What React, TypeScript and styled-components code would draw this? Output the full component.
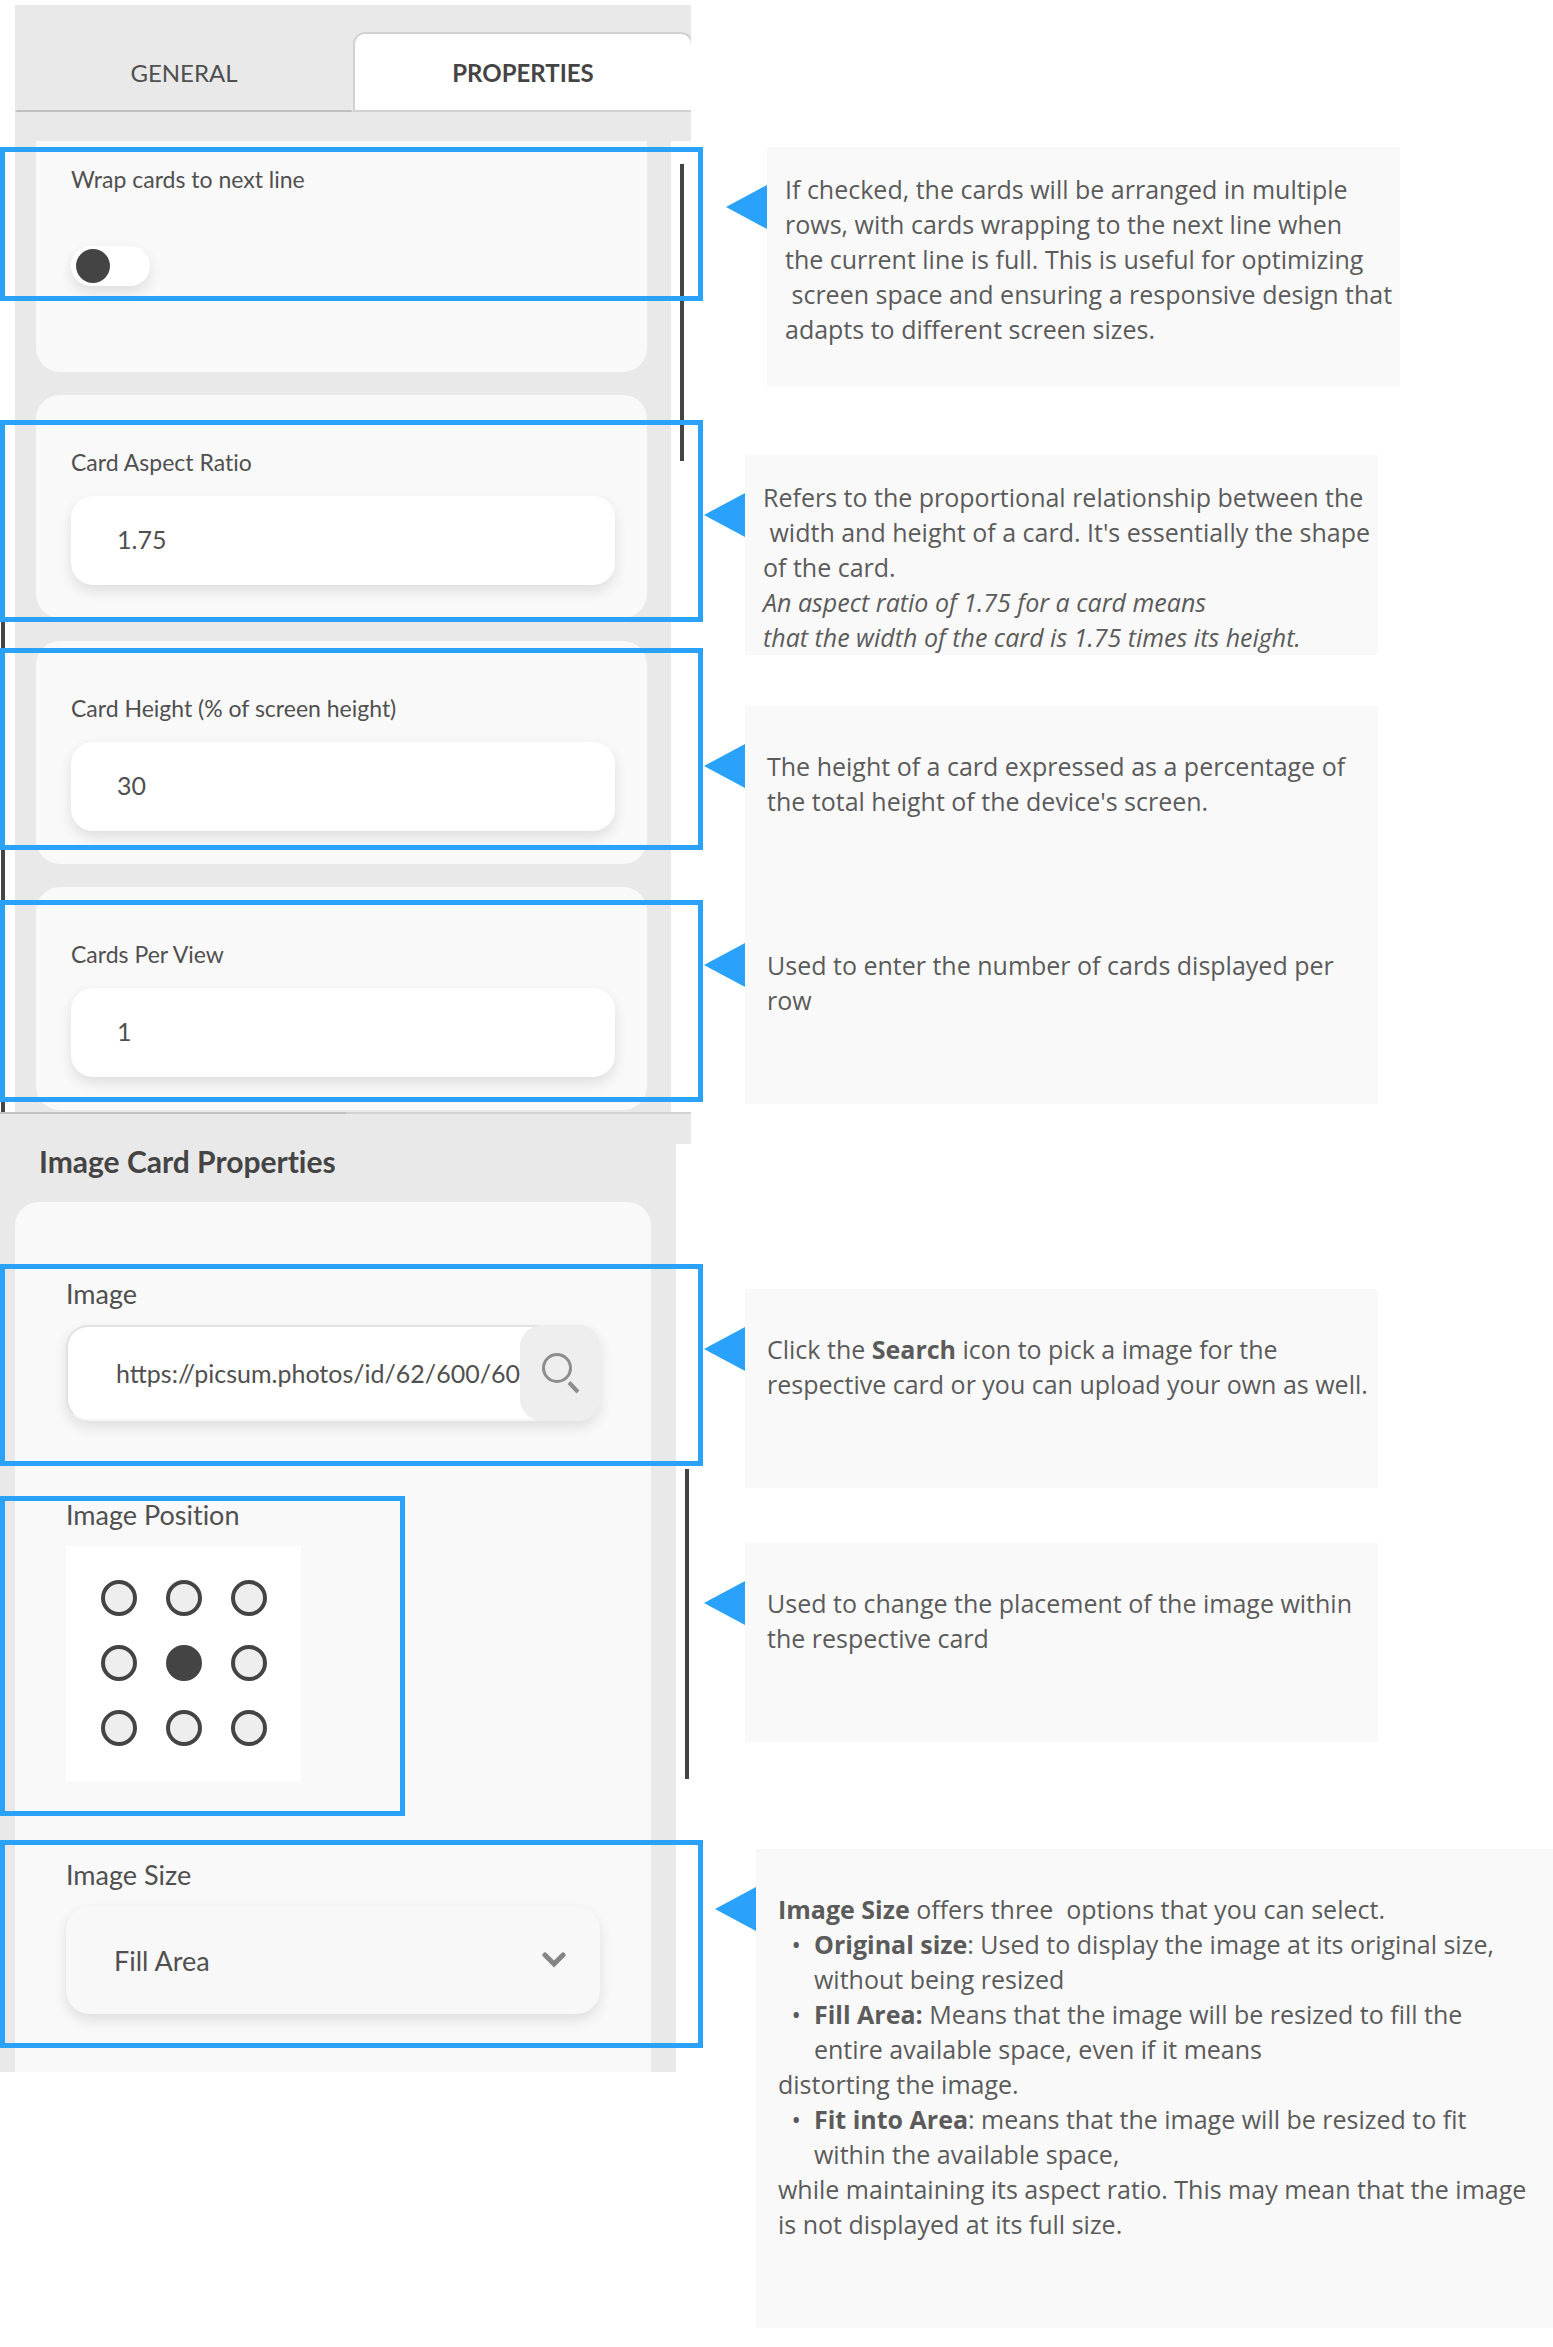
import React, { useState } from "react";
import styled, { createGlobalStyle } from "styled-components";

const ACCENT = "#2aa2fb";
const INK = "#444444";
const TEXT = "#505050";
const PANEL = "#e9e9e9";
const SURFACE = "#f9f9f9";
const SHADOW = "0 6px 14px rgba(0, 0, 0, 0.11)";

const GlobalStyle = createGlobalStyle`
  *, *::before, *::after { box-sizing: border-box; }
  body { margin: 0; background: #ffffff; }
  button, input, select { font-family: inherit; color: inherit; margin: 0; }
`;

const Page = styled.main`
  display: grid;
  grid-template-columns: minmax(0, 703fr) minmax(0, 850fr);
  align-items: start;
`;

/* Left side: the two property panels */

const Panels = styled.div`
  padding-top: 5px;
  font-family: Lato, "Open Sans", sans-serif;
  font-variant-ligatures: none;
  color: ${TEXT};
`;

const ListPanel = styled.section`
  position: relative;
  padding-left: 15px;
`;

const TabStrip = styled.header`
  margin-right: 12px;
  padding: 27px 0 29px;
  background: ${PANEL};
  overflow: hidden;
`;

const Tabs = styled.div`
  display: grid;
  grid-template-columns: 169fr 170fr;
  margin-right: -2px;
`;

const Tab = styled.button<{ $active?: boolean }>`
  height: 80px;
  padding: 2px 0 0;
  font-size: 24px;
  line-height: 30px;
  font-weight: ${(p) => (p.$active ? 700 : 400)};
  color: ${(p) => (p.$active ? INK : TEXT)};
  background: ${(p) => (p.$active ? "#ffffff" : "transparent")};
  border: 2px solid ${(p) => (p.$active ? "#d2d2d2" : "transparent")};
  border-bottom-color: ${(p) => (p.$active ? "#d2d2d2" : "#bfbfbf")};
  border-radius: ${(p) => (p.$active ? "12px 12px 0 0" : "0")};
`;

const CardList = styled.div`
  display: flex;
  flex-direction: column;
  gap: 23px;
  margin-right: 32px;
  padding: 0 24px 2px 21px;
  background: ${PANEL};
`;

const Card = styled.div<{ $continued?: boolean }>`
  position: relative;
  padding: ${(p) => (p.$continued ? "23px 32px 86px 35px" : "52px 32px 33px 35px")};
  background: ${SURFACE};
  border-radius: ${(p) => (p.$continued ? "0 0 24px 24px" : "24px")};
`;

const Label = styled.label`
  display: block;
  font-size: 23px;
  line-height: 30px;
`;

const NumberInput = styled.input`
  display: block;
  width: 100%;
  height: 89px;
  margin-top: 19px;
  padding: 0 46px 4px;
  font-size: 25px;
  background: #ffffff;
  border: 0;
  border-radius: 22px;
  box-shadow: ${SHADOW};
`;

const Switch = styled.input`
  display: flex;
  align-items: center;
  appearance: none;
  width: 79px;
  height: 40px;
  margin-top: 52px;
  padding: 0 5px;
  background: #ffffff;
  border-radius: 20px;
  box-shadow: ${SHADOW};

  &::before {
    content: "";
    width: 34px;
    height: 34px;
    border-radius: 50%;
    background: ${INK};
  }
  &:checked { justify-content: flex-end; }
`;

/* Outline drawn over a control to tie it to its note */
const Highlight = styled.span<{ $top: number; $bottom: number; $left: number; $right: number }>`
  position: absolute;
  top: ${(p) => p.$top}px;
  bottom: ${(p) => p.$bottom}px;
  left: ${(p) => p.$left}px;
  right: ${(p) => p.$right}px;
  border: 5px solid ${ACCENT};
  pointer-events: none;
  z-index: 2;
`;

const ScrollThumb = styled.span<{ $top: number; $height: number; $right?: number; $left?: number }>`
  position: absolute;
  top: ${(p) => p.$top}px;
  height: ${(p) => p.$height}px;
  ${(p) => (p.$left !== undefined ? `left: ${p.$left}px;` : `right: ${p.$right}px;`)}
  width: 4px;
  background: ${INK};
`;

const ImagePanel = styled.section`
  position: relative;
`;

const PanelEdge = styled.div`
  display: grid;
  grid-template-columns: 1fr 1fr;
  margin-right: 12px;
  height: 32px;
  background: ${PANEL};
`;

const EdgeLine = styled.span<{ $tone: string }>`
  border-top: 2px solid ${(p) => p.$tone};
`;

const ImageBody = styled.div`
  margin-right: 27px;
  padding: 0 25px 0 15px;
  background: ${PANEL};
`;

const Title = styled.h2`
  margin: 0;
  padding: 0 24px 24px;
  font-size: 30px;
  line-height: 34px;
  font-weight: 700;
  color: ${INK};
`;

const ImageCard = styled.div`
  display: flex;
  flex-direction: column;
  align-items: flex-start;
  gap: 78px;
  padding: 76px 51px 58px;
  background: ${SURFACE};
  border-radius: 24px 24px 0 0;
`;

const Field = styled.div<{ $fit?: boolean }>`
  position: relative;
  width: ${(p) => (p.$fit ? "auto" : "100%")};
`;

const FieldLabel = styled.label`
  display: block;
  margin-bottom: 15px;
  font-size: 27px;
  line-height: 32px;
`;

const SearchRow = styled.div`
  display: flex;
  height: 96px;
  background: #ffffff;
  border: 2px solid #e2e2e2;
  border-bottom-color: #f4f4f4;
  border-right: 0;
  border-radius: 22px;
  box-shadow: ${SHADOW};
`;

const UrlInput = styled.input`
  flex: 1;
  min-width: 0;
  padding: 0 0 0 48px;
  font-size: 25px;
  background: transparent;
  border: 0;
`;

const SearchButton = styled.button`
  display: grid;
  place-items: center;
  width: 80px;
  height: 96px;
  margin: -2px 0;
  padding: 0;
  background: #eeeeee;
  border: 0;
  border-radius: 22px;
`;

const PositionGrid = styled.div`
  display: grid;
  grid-template-columns: repeat(3, 36px);
  gap: 29px;
  padding: 34px 30px 35px 35px;
  width: 235px;
  background: #ffffff;
`;

const PositionDot = styled.input`
  appearance: none;
  width: 36px;
  height: 36px;
  background: #eeeeee;
  border: 4px solid ${INK};
  border-radius: 50%;
  &:checked { background: ${INK}; }
`;

const SelectRow = styled.div`
  display: grid;
  align-items: center;
  > * { grid-area: 1 / 1; }
  > svg {
    justify-self: end;
    margin-right: 34px;
    pointer-events: none;
  }
`;

const Select = styled.select`
  appearance: none;
  width: 100%;
  height: 108px;
  padding: 0 48px;
  font-size: 27px;
  background: #f8f8f8;
  border: 0;
  border-radius: 24px;
  box-shadow: ${SHADOW};
`;

/* Right side: the notes */

const Notes = styled.div`
  display: flex;
  flex-direction: column;
  padding-top: 147px;
  font-family: "Open Sans", "Noto Sans", sans-serif;
  font-size: 25px;
  line-height: 35px;
  color: #5b5b5b;
`;

const Note = styled.article<{ $gap?: number; $indent?: number; $wide?: boolean }>`
  display: flex;
  align-items: flex-start;
  margin-top: ${(p) => p.$gap ?? 0}px;
  margin-left: ${(p) => p.$indent ?? 1}px;
  max-width: ${(p) => (p.$wide ? "none" : "674px")};
`;

const Pointer = styled.span`
  flex: none;
  margin-top: 38px;
  border: solid transparent;
  border-width: 22px 41px 22px 0;
  border-right-color: ${ACCENT};
`;

const NoteBody = styled.div<{ $compact?: boolean; $bottom?: number }>`
  flex: 1;
  min-width: 0;
  min-height: 199px;
  padding: ${(p) => (p.$compact ? "25px 0 0 18px" : "43px 0 0 22px")};
  padding-bottom: ${(p) => p.$bottom ?? 0}px;
  background: ${SURFACE};
`;

const Text = styled.p`
  margin: 0;
`;

const Bullets = styled.ul`
  margin: 0;
  padding-left: 36px;
  list-style-type: "•\u00a0\u00a0";
`;

const SearchIcon = () => (
  <svg width="40" height="42" viewBox="0 0 40 42" fill="none" stroke="#8d8d8d" strokeWidth="3" aria-hidden="true">
    <circle cx="17" cy="16" r="13.5" />
    <path d="M29 30.5 L38 40" strokeWidth="4" />
  </svg>
);

const ChevronIcon = () => (
  <svg width="24" height="16" viewBox="0 0 24 16" fill="none" stroke="#858585" strokeWidth="5" aria-hidden="true">
    <path d="M3 3 L12 12 L21 3" strokeLinecap="round" />
  </svg>
);

const POSITIONS = [
  "Top left", "Top", "Top right",
  "Left", "Center", "Right",
  "Bottom left", "Bottom", "Bottom right",
];

type CardFieldProps = { id: string; label: string; initial: string; top: number; bottom: number };

function CardField({ id, label, initial, top, bottom }: CardFieldProps) {
  const [value, setValue] = useState(initial);
  return (
    <Card>
      <Label htmlFor={id}>{label}</Label>
      <NumberInput id={id} inputMode="decimal" value={value} onChange={(e) => setValue(e.target.value)} />
      <Highlight $top={top} $bottom={bottom} $left={-36} $right={-56} />
    </Card>
  );
}

export default function App() {
  const [wrap, setWrap] = useState(false);
  const [url, setUrl] = useState("https://picsum.photos/id/62/600/600");
  const [position, setPosition] = useState("Center");

  return (
    <Page>
      <GlobalStyle />
      <Panels>
        <ListPanel>
          <TabStrip>
            <Tabs role="tablist">
              <Tab type="button" role="tab" aria-selected="false">GENERAL</Tab>
              <Tab type="button" role="tab" aria-selected="true" $active>PROPERTIES</Tab>
            </Tabs>
          </TabStrip>
          <ScrollThumb $top={159} $height={297} $right={19} />
          <ScrollThumb $top={510} $height={597} $left={1} />
          <CardList>
            <Card $continued>
              <Label htmlFor="wrap">Wrap cards to next line</Label>
              <Switch id="wrap" type="checkbox" role="switch" checked={wrap} onChange={(e) => setWrap(e.target.checked)} />
              <Highlight $top={6} $bottom={71} $left={-36} $right={-56} />
            </Card>
            <CardField id="ratio" label="Card Aspect Ratio" initial="1.75" top={25} bottom={-4} />
            <CardField id="height" label="Card Height (% of screen height)" initial="30" top={7} bottom={14} />
            <CardField id="per-view" label="Cards Per View" initial="1" top={13} bottom={8} />
          </CardList>
        </ListPanel>

        <ImagePanel>
          <PanelEdge>
            <EdgeLine $tone="#c2c2c2" />
            <EdgeLine $tone="#d2d2d2" />
          </PanelEdge>
          <ScrollThumb $top={357} $height={310} $right={14} />
          <ImageBody>
            <Title>Image Card Properties</Title>
            <ImageCard>
              <Field>
                <FieldLabel htmlFor="image">Image</FieldLabel>
                <SearchRow>
                  <UrlInput id="image" type="text" value={url} onChange={(e) => setUrl(e.target.value)} />
                  <SearchButton type="button" aria-label="Search">
                    <SearchIcon />
                  </SearchButton>
                </SearchRow>
                <Highlight $top={-14} $bottom={-45} $left={-66} $right={-103} />
              </Field>

              <Field $fit role="radiogroup" aria-labelledby="position-label">
                <FieldLabel as="span" id="position-label">Image Position</FieldLabel>
                <PositionGrid>
                  {POSITIONS.map((name) => (
                    <PositionDot
                      key={name}
                      type="radio"
                      name="position"
                      aria-label={name}
                      checked={position === name}
                      onChange={() => setPosition(name)}
                    />
                  ))}
                </PositionGrid>
                <Highlight $top={-3} $bottom={-35} $left={-66} $right={-104} />
              </Field>

              <Field>
                <FieldLabel htmlFor="size">Image Size</FieldLabel>
                <SelectRow>
                  <Select id="size" defaultValue="Fill Area">
                    <option>Original size</option>
                    <option>Fill Area</option>
                    <option>Fit into Area</option>
                  </Select>
                  <ChevronIcon />
                </SelectRow>
                <Highlight $top={-19} $bottom={-34} $left={-66} $right={-103} />
              </Field>
            </ImageCard>
          </ImageBody>
        </ImagePanel>
      </Panels>

      <Notes>
        <Note $indent={23}>
          <Pointer />
          <NoteBody $compact $bottom={39}>
            <Text>
              If checked, the cards will be arranged in multiple
              <br />
              rows, with cards wrapping to the next line when
              <br />
              the current line is full. This is useful for optimizing
              <br />
              &nbsp;screen space and ensuring a responsive design that
              <br />
              adapts to different screen sizes.
            </Text>
          </NoteBody>
        </Note>

        <Note $gap={69}>
          <Pointer />
          <NoteBody $compact>
            <Text>
              Refers to the proportional relationship between the
              <br />
              &nbsp;width and height of a card. It's essentially the shape
              <br />
              of the card.
              <br />
              <em>
                An aspect ratio of 1.75 for a card means
                <br />
                that the width of the card is 1.75 times its height.
              </em>
            </Text>
          </NoteBody>
        </Note>

        <Note $gap={51}>
          <Pointer />
          <NoteBody>
            <Text>
              The height of a card expressed as a percentage of
              <br />
              the total height of the device's screen.
            </Text>
          </NoteBody>
        </Note>

        <Note>
          <Pointer />
          <NoteBody>
            <Text>
              Used to enter the number of cards displayed per
              <br />
              row
            </Text>
          </NoteBody>
        </Note>

        <Note $gap={185}>
          <Pointer />
          <NoteBody>
            <Text>
              Click the <strong>Search</strong> icon to pick a image for the
              <br />
              respective card or you can upload your own as well.
            </Text>
          </NoteBody>
        </Note>

        <Note $gap={55}>
          <Pointer />
          <NoteBody>
            <Text>
              Used to change the placement of the image within
              <br />
              the respective card
            </Text>
          </NoteBody>
        </Note>

        <Note $gap={107} $indent={12} $wide>
          <Pointer />
          <NoteBody $bottom={86}>
            <Text>
              <strong>Image Size</strong> offers three&nbsp; options that you can select.
            </Text>
            <Bullets>
              <li>
                <strong>Original size</strong>: Used to display the image at its original size,
                <br />
                without being resized
              </li>
              <li>
                <strong>Fill Area:</strong> Means that the image will be resized to fill the
                <br />
                entire available space, even if it means
              </li>
            </Bullets>
            <Text>distorting the image.</Text>
            <Bullets>
              <li>
                <strong>Fit into Area</strong>: means that the image will be resized to fit
                <br />
                within the available space,
              </li>
            </Bullets>
            <Text>
              while maintaining its aspect ratio. This may mean that the image
              <br />
              is not displayed at its full size.
            </Text>
          </NoteBody>
        </Note>
      </Notes>
    </Page>
  );
}
